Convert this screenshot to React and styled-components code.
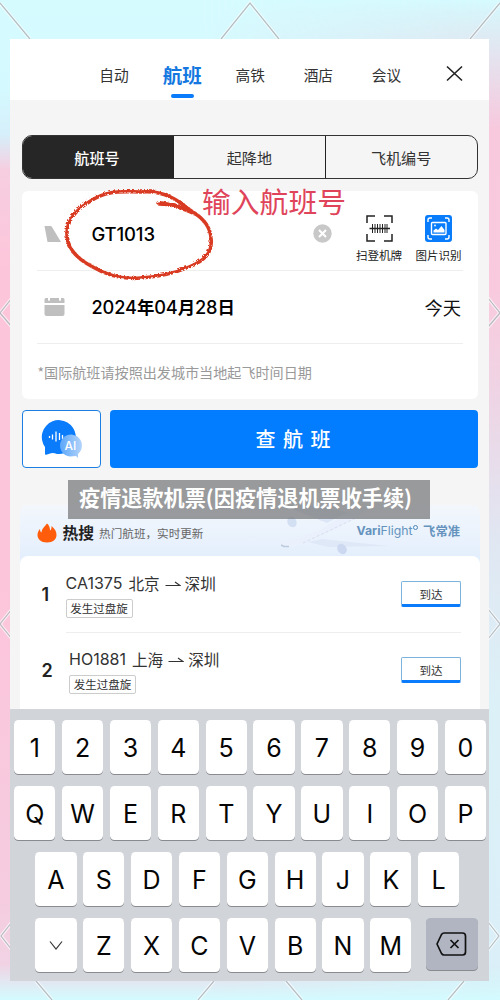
import React from 'react';
import styled, { createGlobalStyle, css } from 'styled-components';

const cjk = '"Noto Sans CJK SC", sans-serif';

const GlobalStyle = createGlobalStyle`
  * { box-sizing: border-box; }
  body {
    margin: 0;
    font-family: Inter, ${cjk};
    color: #222;
  }
  svg { display: block; }
`;

const Page = styled.main`
  position: relative;
  width: 500px;
  height: 1000px;
  padding: 39px 11px 19px 10px;
  overflow: hidden;
  white-space: nowrap;
  background: linear-gradient(to bottom, #d6fbff 0, #d8f4fa 12px, #f8c8dd 130px, #f9cadd 290px, #eed5e5 400px, #e0e7f2 540px, #dcf0f7 700px, #daeff8 960px, #dceaf3 1000px);
  &::before {
    content: '';
    position: absolute;
    inset: 0;
    background: linear-gradient(to bottom, #d6fbff 0, #d4f9ff 90px, #d6effa 135px, #f6cee0 170px, #fdc5da 270px, #fdc5da 580px, #f5cce0 900px, #efd6e6 1000px);
    mask-image: linear-gradient(to right, #000 40%, transparent 98%);
  }
  &::after {
    content: '';
    position: absolute;
    inset: 964px 0 0;
    background: linear-gradient(to top, #d3fbff, rgba(211, 251, 255, 0));
  }
`;

const Pattern = styled.svg`
  position: absolute;
  inset: 0;
  z-index: 1;
`;

const Screen = styled.div`
  position: relative;
  z-index: 2;
  width: 479px;
  height: 942px;
  display: flex;
  flex-direction: column;
  background: #f5f5f5;
`;

const Header = styled.nav`
  display: flex;
  height: 61px;
  padding-left: 70px;
  background: #fff;
`;

const Tab = styled.div`
  width: 68.1px;
  padding-top: ${(p) => (p.$active ? 21 : 24)}px;
  display: flex;
  flex-direction: column;
  align-items: center;
  font: ${(p) => (p.$active ? '700 19.5px/30px' : '400 14.7px/24px')} ${cjk};
  color: ${(p) => (p.$active ? '#1478e0' : '#333')};
  &::after {
    content: '';
    display: ${(p) => (p.$active ? 'block' : 'none')};
    width: 23px;
    height: 4px;
    margin-top: 4px;
    border-radius: 2px;
    background: #0a7bfb;
  }
`;

const CloseButton = styled.div`
  width: 68px;
  display: flex;
  justify-content: center;
  padding-top: 26px;
`;

const Segments = styled.div`
  display: flex;
  height: 44px;
  margin: 35px 11.5px 0 12px;
  border: 1px solid #333;
  border-radius: 10px;
  overflow: hidden;
`;

const Segment = styled.div`
  flex: ${(p) => (p.$active ? '0 0 150px' : 1)};
  padding-right: ${(p) => (p.$active ? 2 : 0)}px;
  display: flex;
  align-items: center;
  justify-content: center;
  font: ${(p) => (p.$active ? 500 : 400)} 15.1px/24px ${cjk};
  color: ${(p) => (p.$active ? '#fff' : '#333')};
  background: ${(p) => (p.$active ? '#262626' : 'transparent')};
  & + & { border-left: 1px solid #222; }
`;

const Card = styled.section`
  height: 208px;
  margin: 12px 11px 0 12px;
  padding: 0 15px;
  border-radius: 6px;
  background: #fff;
`;

const FieldRow = styled.div`
  display: flex;
  align-items: ${(p) => (p.$tall ? 'flex-start' : 'center')};
  height: ${(p) => (p.$tall ? 79.5 : 73.5)}px;
  border-bottom: 1px solid #eee;
  & > * { flex-shrink: 0; }
`;

const FieldIcon = styled.div`
  width: 54.5px;
  padding: ${(p) => p.$pad || '0 0 0 7px'};
`;

const FlightNumber = styled.div`
  width: 221px;
  padding-top: 29px;
  font: 500 18.5px/28px Inter, sans-serif;
  letter-spacing: -0.15px;
  color: #000;
`;

const ClearIcon = styled.div`
  width: 37.5px;
  padding-top: 32.5px;
`;

const Tool = styled.div`
  width: ${(p) => p.$width || 58}px;
  padding-top: 24px;
  display: flex;
  flex-direction: column;
  align-items: center;
  font: 400 11.5px/18px ${cjk};
  color: #222;
  svg { margin-bottom: 4px; }
`;

const DateText = styled.div`
  flex: 1;
  font: 500 18.2px/28px Inter, ${cjk};
  letter-spacing: -0.1px;
  color: #000;
  b { font: 700 17.4px/28px ${cjk}; }
`;

const Today = styled.div`
  padding-right: 2px;
  font: 400 18.3px/28px ${cjk};
  color: #111;
`;

const Note = styled.p`
  margin: 16px 0 0 0.5px;
  font: 400 14.1px/24px ${cjk};
  color: #999;
`;

const Actions = styled.div`
  display: flex;
  gap: 9px;
  height: 58px;
  margin: 11px 11.5px 0 12px;
`;

const AssistantButton = styled.div`
  width: 79px;
  padding: 8px 0 0 16px;
  border: 1px solid #1b7ee0;
  border-radius: 4px;
  background: #fff;
`;

const SearchButton = styled.div`
  flex: 1;
  display: flex;
  align-items: center;
  justify-content: center;
  border-radius: 4px;
  background: #037dff;
  color: #fff;
  font: 500 20px/30px ${cjk};
  letter-spacing: 7.5px;
  text-indent: 6px;
`;

const HotPanel = styled.section`
  flex: 1;
  display: flex;
  flex-direction: column;
  margin: 37px 9px 0 10px;
  border-radius: 8px 8px 0 0;
  background: linear-gradient(#f3f7fc, #e4effd 51px);
`;

const HotHeader = styled.div`
  position: relative;
  display: flex;
  align-items: center;
  height: 51px;
  padding: 5px 20px 0 16.5px;
`;

const Plane = styled.svg`
  position: absolute;
  left: 254px;
  top: 0;
`;

const HotTitle = styled.h2`
  margin: 0 5px 0 6px;
  font: 700 15.8px/24px ${cjk};
  color: #222;
`;

const HotSubtitle = styled.div`
  flex: 1;
  font: 400 11.6px/20px ${cjk};
  color: #666;
`;

const Brand = styled.div`
  position: relative;
  top: -2px;
  display: flex;
  align-items: center;
  font: 400 12.3px/20px Inter, ${cjk};
  color: #6593bd;
  b { font-weight: 700; }
  i {
    width: 5px;
    height: 5px;
    margin: 0 5px 8px 0.5px;
    border: 1.5px solid #4d86b9;
    border-radius: 50%;
  }
  strong { font: 700 12.3px/20px ${cjk}; }
`;

const HotList = styled.div`
  flex: 1;
  padding: 0 19px 0 21px;
  border-radius: 8px 8px 0 0;
  background: #fff;
`;

const HotItem = styled.div`
  display: flex;
  height: 76px;
`;

const Rank = styled.div`
  width: ${(p) => p.$width}px;
  padding: 25px 0 0 0.5px;
  font: 600 18px/28px Inter, sans-serif;
  color: #222;
`;

const ItemBody = styled.div`
  flex: 1;
  height: 76.5px;
  padding-top: 16px;
  border-bottom: 1px solid ${(p) => (p.$divided ? '#eee' : 'transparent')};
`;

const Route = styled.div`
  display: flex;
  align-items: center;
  font: 400 16px/23px Inter, ${cjk};
  color: #333;
  svg { margin: 0 4px 0 5px; }
  span { font: 400 15.6px/23px ${cjk}; }
  span:first-of-type { margin-left: 6px; }
`;

const Tag = styled.div`
  width: 67px;
  height: 19px;
  margin-top: 4px;
  border: 1px solid #ccc;
  border-radius: 2px;
  text-align: center;
  font: 400 11.5px/17px ${cjk};
  color: #333;
`;

const ArrivalCell = styled.div`
  width: 60px;
  height: 76.5px;
  padding-top: 25px;
  border-bottom: 1px solid ${(p) => (p.$divided ? '#eee' : 'transparent')};
`;

const Arrival = styled.div`
  height: 26px;
  border: 1px solid #7cb3dd;
  border-bottom: 3px solid #0a7bfb;
  border-radius: 2px;
  text-align: center;
  font: 400 11.5px/24px ${cjk};
  color: #333;
`;

const Keyboard = styled.div`
  display: flex;
  flex-direction: column;
  gap: 12px;
  height: 272.5px;
  padding: 11.5px 0 0 4.2px;
  background: #d1d5da;
`;

const KeyRow = styled.div`
  display: flex;
  gap: 6.55px;
  padding-left: ${(p) => (p.$inset ? 21.1 : 0)}px;
`;

const keyShape = css`
  display: flex;
  align-items: center;
  justify-content: center;
  border-radius: 4.5px;
  box-shadow: 0 1px 0.5px #898b8f;
`;

const Key = styled.div`
  ${keyShape}
  width: 41.3px;
  height: 54px;
  padding-top: 1px;
  background: #fff;
  color: #050505;
  font: 400 25px/30px Inter, sans-serif;
`;

const DeleteKey = styled.div`
  ${keyShape}
  width: 52px;
  height: 52px;
  margin-left: 7.5px;
  background: #b0b5c1;
`;

const Annotation = styled.div`
  position: absolute;
  z-index: 3;
  left: 202px;
  top: 180px;
  font: 400 28.8px/42px ${cjk};
  color: #e0445a;
`;

const Scribble = styled.svg`
  position: absolute;
  z-index: 3;
  left: 60px;
  top: 185px;
`;

const Caption = styled.div`
  position: absolute;
  z-index: 3;
  left: 68px;
  top: 480px;
  width: 362px;
  height: 39px;
  padding-left: 11px;
  background: rgba(124, 125, 126, 0.76);
  color: #fff;
  font: 700 21.15px/34px ${cjk};
`;

const diamonds = [
  'M0 3L30 39', 'M221 39L250 3L279 39', 'M470 39L500 3',
  'M12 298L0 313L12 327', 'M12 609L0 624L12 639', 'M12 922L1 936L12 950',
  'M488 298L500 313L488 327', 'M488 609L500 624L488 639', 'M488 922L499 936L488 950',
  'M36 981L52 1000', 'M214 981L198 1000', 'M286 981L302 1000', 'M464 981L448 1000',
].join('');

const Backdrop = () => (
  <Pattern width="500" height="1000" fill="none">
    <path d={diamonds} stroke="#fff" strokeOpacity=".65" strokeWidth="3.5" />
    <path d={diamonds} stroke="#929da5" strokeOpacity=".65" strokeWidth="1.2" />
  </Pattern>
);

const CloseIcon = () => (
  <svg width="17" height="17" fill="none" stroke="#222" strokeWidth="1.6">
    <path d="M1 1.5l15 14M16 1.5l-15 14" />
  </svg>
);

const TailIcon = () => (
  <svg width="18" height="16" fill="#bfbfbf"><path d="M.5 0h6q1 0 1.500 1l9 15H3.500z" /></svg>
);

const CalendarIcon = () => (
  <svg width="21" height="19" fill="#bfbfbf">
    <path d="M2 1h2v2q1 2 2 0V1h9v2q1 2 2 0V1h2q1.500 0 1.500 1.500V6H.5V2.500Q.5 1 2 1zM.5 8h20v9q0 2-2 2h-16q-2 0-2-2z" />
  </svg>
);

const ClearGlyph = () => (
  <svg width="19" height="19">
    <circle cx="9.500" cy="9.500" r="9.200" fill="#c8c8c8" />
    <path d="M6 6l7 7M13 6l-7 7" stroke="#fff" strokeWidth="2" />
  </svg>
);

const ScanIcon = () => (
  <svg width="27" height="27" fill="none" stroke="#222" strokeWidth="1.500">
    <path d="M1 8V1h8M18 1h8v7M26 19v7h-8M9 26H1v-7" />
    <path d="M3.500 13.500h20.500" />
    <path d="M6.500 9v9M9 9v9M11.500 9v9M14 9v9M16.500 9v9M19 9v9M21 9v9" strokeWidth="1" />
  </svg>
);

const ImageIcon = () => (
  <svg width="27" height="27" fill="none" stroke="#fff" strokeWidth="1.400">
    <rect width="27" height="27" rx="3" fill="#087cfb" stroke="none" />
    <path d="M3 7V5q0-2 2-2h2M20 3h2q2 0 2 2v2M24 20v2q0 2-2 2h-2M7 24H5q-2 0-2-2v-2" />
    <rect x="6.500" y="7.500" width="14.500" height="12" rx="1" />
    <path d="M8.500 17.500v-2l2.500-2 2 1.500 3.500-4 3 4v2.500z" fill="#fff" stroke="none" />
    <circle cx="10" cy="10.500" r=".9" fill="#fff" stroke="none" />
  </svg>
);

const AssistantIcon = () => (
  <svg width="43" height="40">
    <defs>
      <linearGradient id="bubble" x1="0" x2="1"><stop stopColor="#5ba6f9" /><stop offset="1" stopColor="#b3d4fa" /></linearGradient>
    </defs>
    <path d="M6 35.500V28A17 17 0 1 1 18 35q-4-1.500-7-.5-3 1.500-5 1z" fill="#0a7bfa" />
    <path d="M10.500 17v2M13.500 15.500v5M17 12.500v10M20.500 14v7M23.500 16v4" stroke="#fff" strokeWidth="1.300" />
    <path d="M37 37L31 37.500a11 11 0 1 1 8-2.500V39z" fill="url(#bubble)" />
    <text x="31.500" y="31" textAnchor="middle" fontFamily="Inter, sans-serif" fontSize="12" fontWeight="500" fill="#fff">AI</text>
  </svg>
);

const FlameIcon = () => (
  <svg width="20" height="20" fill="#ff5c0b">
    <path d="M10 19.500C4 19.500.5 16 .5 12c0-2.500 1-4.500 2.500-6 0 2 .5 3 1.500 3.500C5 5 8 3.500 10 .5c2 1.500 3 4 3 7 1-.5 1.700-2 1.500-4.500 3.500 3 5 5.500 5 9 0 4.500-3.500 7.500-9.500 7.500z" />
  </svg>
);

const PlaneArt = () => (
  <Plane width="120" height="51" fill="none">
    <path d="M5 38q-1 4 8 4c15 0 40-13 60-25q18-10 23-16L74 7 46 25 18 36q-8 0-13 2z" fill="#eaf1fc" />
    <path d="M53 18L8 0h24l42 7z" fill="#dce6f6" />
    <path d="M48 34l66 7-60 1-20-5z" fill="#dfe8f6" />
    <ellipse cx="18" cy="17" rx="4.500" ry="5.500" fill="#d3dff2" transform="rotate(-25 18 17)" />
    <ellipse cx="68" cy="44" rx="4.500" ry="5.500" fill="#cbd8ef" transform="rotate(-35 68 44)" />
    <path d="M29 38l55-26" stroke="#d9def0" strokeDasharray="3 2" />
    <path d="M7 40l3 1.500h5" stroke="#bccade" strokeWidth="1.500" />
  </Plane>
);

const ArrowIcon = () => (
  <svg width="16" height="10" fill="none" stroke="#333" strokeWidth="1.200">
    <path d="M.5 6.500H15L10 3" />
  </svg>
);

const ChevronIcon = () => (
  <svg width="14" height="10" fill="none" stroke="#333" strokeWidth="1.200">
    <path d="M1 .5l6 7.500L13 .5" />
  </svg>
);

const BackspaceIcon = () => (
  <svg width="31" height="24" fill="none" stroke="#111" strokeWidth="1.700" strokeLinejoin="round">
    <path d="M8 1h18.500Q29.500 1 29.500 4v16q0 3-3 3H8q-1.500 0-2.500-1.500L1 12l4.500-9.500Q6.500 1 8 1z" />
    <path d="M14.500 8l8 8M22.500 8l-8 8" />
  </svg>
);

const Circle = () => (
  <Scribble width="160" height="100" fill="none" stroke="#d93a20" strokeLinecap="round">
    <defs>
      <filter id="crayon" x="-5%" y="-5%" width="110%" height="110%">
        <feTurbulence baseFrequency=".45" numOctaves="2" seed="4" />
        <feDisplacementMap in="SourceGraphic" scale="2.500" />
      </filter>
    </defs>
    <g filter="url(#crayon)">
      <path d="M98 18C111 18 121 21 133 27C143 33 149 40 150 52C152 67 143 75 128 81C112 88 96 91 80 92C61 94 45 89 30 80C15 72 7 62 6 50C5 35 15 24 28 16C46 3 63 6 80 6C100 4 115 11 129 25" strokeWidth="3.500" />
      <path d="M101 17Q117 20 134 28L118 16" strokeWidth="3.500" />
    </g>
  </Scribble>
);

const hot = [
  { rank: 1, flight: 'CA1375', from: '北京', width: 24.5 },
  { rank: 2, flight: 'HO1881', from: '上海', width: 28 },
];

export default function App() {
  return (
    <Page>
      <GlobalStyle />
      <Backdrop />
      <Screen>
        <Header>
          {['自动', '航班', '高铁', '酒店', '会议'].map((t) => (
            <Tab key={t} $active={t === '航班'}>{t}</Tab>
          ))}
          <CloseButton><CloseIcon /></CloseButton>
        </Header>
        <Segments>
          <Segment $active>航班号</Segment>
          <Segment>起降地</Segment>
          <Segment>飞机编号</Segment>
        </Segments>
        <Card>
          <FieldRow $tall>
            <FieldIcon $pad="35px 0 0 7px"><TailIcon /></FieldIcon>
            <FlightNumber>GT1013</FlightNumber>
            <ClearIcon><ClearGlyph /></ClearIcon>
            <Tool>
              <ScanIcon />
              扫登机牌
            </Tool>
            <Tool $width={61}>
              <ImageIcon />
              图片识别
            </Tool>
          </FieldRow>
          <FieldRow>
            <FieldIcon><CalendarIcon /></FieldIcon>
            <DateText>2024<b>年</b>04<b>月</b>28<b>日</b></DateText>
            <Today>今天</Today>
          </FieldRow>
          <Note>*国际航班请按照出发城市当地起飞时间日期</Note>
        </Card>
        <Actions>
          <AssistantButton><AssistantIcon /></AssistantButton>
          <SearchButton>查航班</SearchButton>
        </Actions>
        <HotPanel>
          <HotHeader>
            <PlaneArt />
            <FlameIcon />
            <HotTitle>热搜</HotTitle>
            <HotSubtitle>热门航班，实时更新</HotSubtitle>
            <Brand><b>Vari</b>Flight<i /><strong>飞常准</strong></Brand>
          </HotHeader>
          <HotList>
            {hot.map((h, n) => (
              <HotItem key={h.rank}>
                <Rank $width={h.width}>{h.rank}</Rank>
                <ItemBody $divided={n === 0}>
                  <Route>{h.flight}<span>{h.from}</span><ArrowIcon /><span>深圳</span></Route>
                  <Tag>发生过盘旋</Tag>
                </ItemBody>
                <ArrivalCell $divided={n === 0}><Arrival>到达</Arrival></ArrivalCell>
              </HotItem>
            ))}
          </HotList>
        </HotPanel>
        <Keyboard>
          <KeyRow>{[...'1234567890'].map((k) => <Key key={k}>{k}</Key>)}</KeyRow>
          <KeyRow>{[...'QWERTYUIOP'].map((k) => <Key key={k}>{k}</Key>)}</KeyRow>
          <KeyRow $inset>{[...'ASDFGHJKL'].map((k) => <Key key={k}>{k}</Key>)}</KeyRow>
          <KeyRow $inset>
            <Key><ChevronIcon /></Key>
            {[...'ZXCVBNM'].map((k) => <Key key={k}>{k}</Key>)}
            <DeleteKey><BackspaceIcon /></DeleteKey>
          </KeyRow>
        </Keyboard>
      </Screen>
      <Circle />
      <Annotation>输入航班号</Annotation>
      <Caption>疫情退款机票(因疫情退机票收手续)</Caption>
    </Page>
  );
}
